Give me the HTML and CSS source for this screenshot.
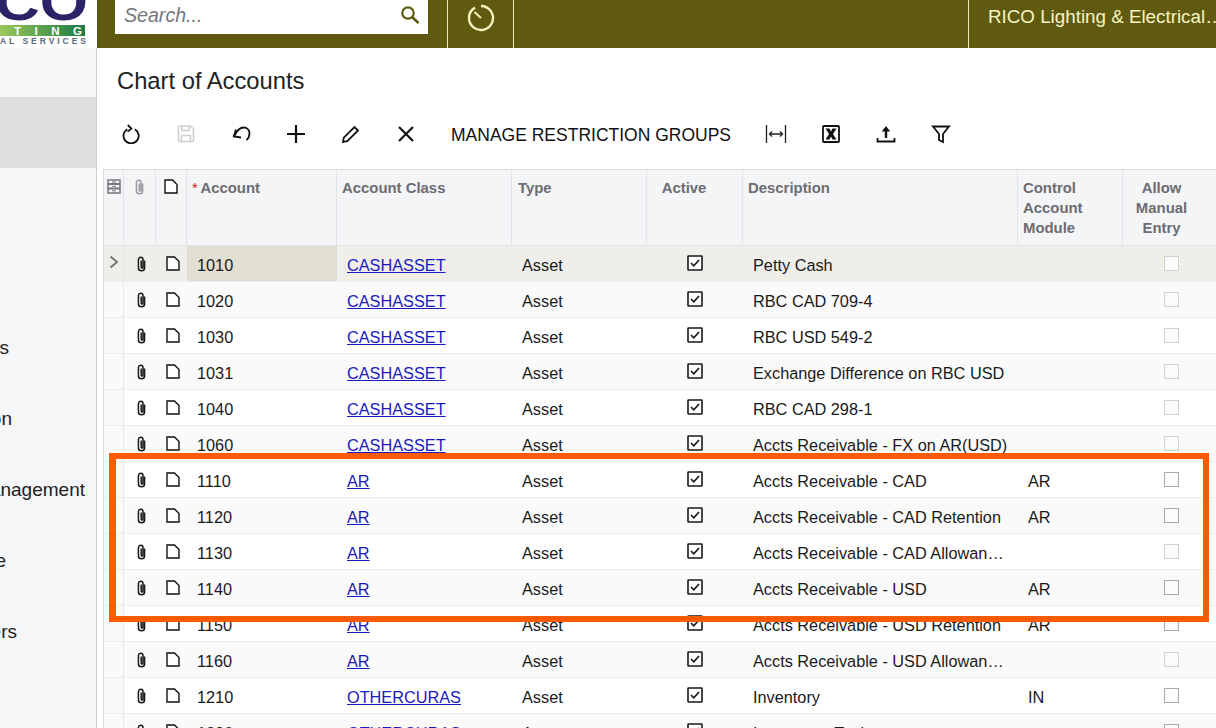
FILE: index.html
```html
<!DOCTYPE html>
<html lang="en">
<head>
<meta charset="utf-8">
<title>Chart of Accounts</title>
<link rel="stylesheet" href="styles.css">
</head>
<body>
<svg class="defs" aria-hidden="true">
  <symbol id="clip" viewBox="0 0 11 16"><path d="M8.6 4.5v7.2a3.1 3.1 0 0 1-6.2 0V3.6a2.3 2.3 0 0 1 4.6 0v7.6a.9.9 0 0 1-1.8 0V4.5" fill="none" stroke="currentColor" stroke-width="1.5"/></symbol>
  <symbol id="doc" viewBox="0 0 14 15"><path d="M1 1h7.5L13 5.5V14H1z" fill="#fff" stroke="currentColor" stroke-width="1.4"/></symbol>
  <symbol id="chk" viewBox="0 0 16 16"><rect x="1" y="1" width="14" height="14" rx=".5" fill="#fff" stroke="#1a1a1a" stroke-width="1.6"/><path d="M4 8l2.8 2.8L12 5" fill="none" stroke="#1a1a1a" stroke-width="1.7"/></symbol>
</svg>

<header class="topbar">
  <div class="logo">
    <svg width="97" height="48" viewBox="0 0 97 48">
      <defs><linearGradient id="band"><stop offset="0" stop-color="#9cc75a"/><stop offset="1" stop-color="#1c7a44"/></linearGradient></defs>
      <text class="logo-big" x="-5" y="20" textLength="93" lengthAdjust="spacingAndGlyphs">CO</text>
      <rect y="25" width="85" height="11" fill="url(#band)"/>
      <text class="logo-band" x="14" y="35" textLength="68">T I N G</text>
      <text class="logo-sub" x="0" y="44" textLength="86">AL SERVICES</text>
    </svg>
  </div>
  <div class="search">
    <span class="search-text">Search...</span>
    <svg class="search-icon" width="20" height="20" viewBox="0 0 20 20"><circle cx="8" cy="8" r="5.7" fill="none" stroke="currentColor" stroke-width="2.2"/><path d="M12.3 12.3L18.5 18" stroke="currentColor" stroke-width="2.6" fill="none"/></svg>
  </div>
  <div class="timer">
    <svg width="30" height="30" viewBox="0 0 30 30"><path d="M9 4.6A12 12 0 1 0 15 3" fill="none" stroke="currentColor" stroke-width="2.400"/><path d="M8.500 9L15 15" stroke="currentColor" stroke-width="2" fill="none"/></svg>
  </div>
  <div class="spacer"></div>
  <div class="tenant">RICO Lighting &amp; Electrical Services Ltd</div>
</header>

<div class="body-wrap">
  <nav class="sidebar">
    <div class="side-item"></div>
    <div class="side-item side-active"></div>
    <div class="side-item"></div>
    <div class="side-item"></div>
    <div class="side-item end-s">Payables</div>
    <div class="side-item end-on">Organization</div>
    <div class="side-item end-nag">Management</div>
    <div class="side-item end-e">Finance</div>
    <div class="side-item end-rs">Customers</div>
  </nav>

  <main class="content">
    <h1 class="title">Chart of Accounts</h1>
    <div class="toolbar">
      <span class="tool"><svg width="20" height="20" viewBox="0 0 20 20"><path d="M6.3 5.2a7.6 7.6 0 1 0 7.6 0" class="st"/><path d="M6.8 1l3.6 3.6-3.8 3" class="st"/></svg></span>
      <span class="tool"><svg width="20" height="20" viewBox="0 0 20 20"><path d="M2.500 3.500a1.500 1.500 0 0 1 1.500-1.500h10.500l3 3v11a1.500 1.500 0 0 1-1.500 1.500H4a1.500 1.500 0 0 1-1.500-1.500z" class="st1"/><path d="M6 2v4.500h7V2M5.500 18v-6.500h9V18" class="st1"/></svg></span>
      <span class="tool"><svg width="20" height="20" viewBox="0 0 20 20"><path d="M5 5.500L2.800 12.500L10 13.500" class="st"/><path d="M3.200 12C6 6.500 9 3.500 12.500 3.500C16 3.500 18.500 6 18.500 9.300C18.500 12 17.300 14.500 15.500 16" class="st"/></svg></span>
      <span class="tool"><svg width="20" height="20" viewBox="0 0 20 20"><path d="M10 1v18M1 10h18" class="st2"/></svg></span>
      <span class="tool"><svg width="20" height="20" viewBox="0 0 20 20"><path d="M2 18l.8-4.300L13.500 3 17 6.500 6.300 17.200z" class="st"/></svg></span>
      <span class="tool"><svg width="20" height="20" viewBox="0 0 20 20"><path d="M3 3l14 14M17 3L3 17" class="st2"/></svg></span>
      <span class="tool-text">MANAGE RESTRICTION GROUPS</span>
      <span class="tool"><svg width="22" height="20" viewBox="0 0 22 20"><path d="M1.500 1v18M20.500 1v18M4.500 10h13M7 7.500L4.500 10 7 12.500M15 7.500l2.500 2.500-2.500 2.500" class="st3"/></svg></span>
      <span class="tool"><svg width="20" height="20" viewBox="0 0 20 20"><rect x="2" y="2" width="16" height="16" rx="1" fill="none" stroke="#111" stroke-width="1.800"/><path d="M4.500 4.500h4L10 7.500l1.500-3h4l-3.500 5.500 3.500 5.500h-4L10 12.500l-1.500 3h-4L8 10z" fill="#111"/></svg></span>
      <span class="tool"><svg width="20" height="20" viewBox="0 0 20 20"><path d="M1.500 14v3.500h17V14" class="st"/><path d="M10 14V4" stroke="#111" stroke-width="2.400" fill="none"/><path d="M5.800 7.500L10 2l4.200 5.500z" fill="#111"/></svg></span>
      <span class="tool"><svg width="20" height="20" viewBox="0 0 20 20"><path d="M2 2.500h16l-6 7.500v8l-4-2v-6z" class="st"/></svg></span>
    </div>

    <table class="grid">
      <colgroup>
        <col class="c-sel"><col class="c-clip"><col class="c-doc"><col class="c-acc"><col class="c-class"><col class="c-type"><col class="c-act"><col class="c-desc"><col class="c-ctl"><col class="c-man">
      </colgroup>
      <thead>
        <tr>
          <th class="ico"><svg class="hd-files" width="14" height="15" viewBox="0 0 14 15"><path d="M1 1h12v13H1z" fill="none" stroke="currentColor" stroke-width="1.500"/><path d="M1 5h12M1 9.500h12" stroke="currentColor" stroke-width="2"/><path d="M5 3h4M5 7.300h4M5 11.800h4" stroke="currentColor" stroke-width="1"/></svg></th>
          <th class="ico"><svg class="hd-clip"><use href="#clip"/></svg></th>
          <th class="ico"><svg class="hd-doc"><use href="#doc"/></svg></th>
          <th class="acc-h"><span class="req">*</span> Account</th>
          <th>Account Class</th>
          <th class="type-h">Type</th>
          <th class="ctr">Active</th>
          <th>Description</th>
          <th>Control<br>Account<br>Module</th>
          <th class="ctr">Allow<br>Manual<br>Entry</th>
        </tr>
      </thead>
      <tbody>
        <tr class="sel"><td class="sel-cell"><svg class="chev" width="12" height="14" viewBox="0 0 12 14"><path d="M2.500 1.500L9 7l-6.500 5.500" fill="none" stroke="currentColor" stroke-width="2"/></svg></td><td class="ico"><svg class="clip"><use href="#clip"/></svg></td><td class="ico"><svg class="doc"><use href="#doc"/></svg></td><td class="acc-on">1010</td><td><a href="#">CASHASSET</a></td><td>Asset</td><td class="ctr"><svg class="chk"><use href="#chk"/></svg></td><td>Petty Cash</td><td></td><td class="ctr"><span class="box lt"></span></td></tr>
        <tr><td></td><td class="ico"><svg class="clip"><use href="#clip"/></svg></td><td class="ico"><svg class="doc"><use href="#doc"/></svg></td><td>1020</td><td><a href="#">CASHASSET</a></td><td>Asset</td><td class="ctr"><svg class="chk"><use href="#chk"/></svg></td><td>RBC CAD 709-4</td><td></td><td class="ctr"><span class="box lt"></span></td></tr>
        <tr><td></td><td class="ico"><svg class="clip"><use href="#clip"/></svg></td><td class="ico"><svg class="doc"><use href="#doc"/></svg></td><td>1030</td><td><a href="#">CASHASSET</a></td><td>Asset</td><td class="ctr"><svg class="chk"><use href="#chk"/></svg></td><td>RBC USD 549-2</td><td></td><td class="ctr"><span class="box lt"></span></td></tr>
        <tr><td></td><td class="ico"><svg class="clip"><use href="#clip"/></svg></td><td class="ico"><svg class="doc"><use href="#doc"/></svg></td><td>1031</td><td><a href="#">CASHASSET</a></td><td>Asset</td><td class="ctr"><svg class="chk"><use href="#chk"/></svg></td><td>Exchange Difference on RBC USD</td><td></td><td class="ctr"><span class="box lt"></span></td></tr>
        <tr><td></td><td class="ico"><svg class="clip"><use href="#clip"/></svg></td><td class="ico"><svg class="doc"><use href="#doc"/></svg></td><td>1040</td><td><a href="#">CASHASSET</a></td><td>Asset</td><td class="ctr"><svg class="chk"><use href="#chk"/></svg></td><td>RBC CAD 298-1</td><td></td><td class="ctr"><span class="box lt"></span></td></tr>
        <tr><td></td><td class="ico"><svg class="clip"><use href="#clip"/></svg></td><td class="ico"><svg class="doc"><use href="#doc"/></svg></td><td>1060</td><td><a href="#">CASHASSET</a></td><td>Asset</td><td class="ctr"><svg class="chk"><use href="#chk"/></svg></td><td>Accts Receivable - FX on AR(USD)</td><td></td><td class="ctr"><span class="box lt"></span></td></tr>
        <tr><td></td><td class="ico"><svg class="clip"><use href="#clip"/></svg></td><td class="ico"><svg class="doc"><use href="#doc"/></svg></td><td>1110</td><td><a href="#">AR</a></td><td>Asset</td><td class="ctr"><svg class="chk"><use href="#chk"/></svg></td><td>Accts Receivable - CAD</td><td>AR</td><td class="ctr"><span class="box"></span></td></tr>
        <tr><td></td><td class="ico"><svg class="clip"><use href="#clip"/></svg></td><td class="ico"><svg class="doc"><use href="#doc"/></svg></td><td>1120</td><td><a href="#">AR</a></td><td>Asset</td><td class="ctr"><svg class="chk"><use href="#chk"/></svg></td><td>Accts Receivable - CAD Retention</td><td>AR</td><td class="ctr"><span class="box"></span></td></tr>
        <tr><td></td><td class="ico"><svg class="clip"><use href="#clip"/></svg></td><td class="ico"><svg class="doc"><use href="#doc"/></svg></td><td>1130</td><td><a href="#">AR</a></td><td>Asset</td><td class="ctr"><svg class="chk"><use href="#chk"/></svg></td><td>Accts Receivable - CAD Allowance for Doubtful Accounts</td><td></td><td class="ctr"><span class="box lt"></span></td></tr>
        <tr><td></td><td class="ico"><svg class="clip"><use href="#clip"/></svg></td><td class="ico"><svg class="doc"><use href="#doc"/></svg></td><td>1140</td><td><a href="#">AR</a></td><td>Asset</td><td class="ctr"><svg class="chk"><use href="#chk"/></svg></td><td>Accts Receivable - USD</td><td>AR</td><td class="ctr"><span class="box"></span></td></tr>
        <tr><td></td><td class="ico"><svg class="clip"><use href="#clip"/></svg></td><td class="ico"><svg class="doc"><use href="#doc"/></svg></td><td>1150</td><td><a href="#">AR</a></td><td>Asset</td><td class="ctr"><svg class="chk"><use href="#chk"/></svg></td><td>Accts Receivable - USD Retention</td><td>AR</td><td class="ctr"><span class="box"></span></td></tr>
        <tr><td></td><td class="ico"><svg class="clip"><use href="#clip"/></svg></td><td class="ico"><svg class="doc"><use href="#doc"/></svg></td><td>1160</td><td><a href="#">AR</a></td><td>Asset</td><td class="ctr"><svg class="chk"><use href="#chk"/></svg></td><td>Accts Receivable - USD Allowance for Doubtful Accounts</td><td></td><td class="ctr"><span class="box lt"></span></td></tr>
        <tr><td></td><td class="ico"><svg class="clip"><use href="#clip"/></svg></td><td class="ico"><svg class="doc"><use href="#doc"/></svg></td><td>1210</td><td><a href="#">OTHERCURAS</a></td><td>Asset</td><td class="ctr"><svg class="chk"><use href="#chk"/></svg></td><td>Inventory</td><td>IN</td><td class="ctr"><span class="box"></span></td></tr>
        <tr><td></td><td class="ico"><svg class="clip"><use href="#clip"/></svg></td><td class="ico"><svg class="doc"><use href="#doc"/></svg></td><td>1220</td><td><a href="#">OTHERCURAS</a></td><td>Asset</td><td class="ctr"><svg class="chk"><use href="#chk"/></svg></td><td>Inventory - Tools</td><td></td><td class="ctr"><span class="box"></span></td></tr>
      </tbody>
    </table>
  </main>
</div>

<div class="callout"></div>
</body>
</html>
```

FILE: styles.css
```css
* { box-sizing: border-box; }
html, body { margin: 0; height: 728px; overflow: hidden; background: #fff; }
body { font-family: "Liberation Sans", Arial, sans-serif; color: #1a1a1a; position: relative; }
.defs { position: absolute; width: 0; height: 0; }

/* top bar */
.topbar { display: flex; height: 48px; background: #5f5a10; color: #f6f3c2; }
.logo { width: 97px; flex: none; background: #f5f6f8; overflow: hidden; }
.logo svg { display: block; background: #fff; }
.logo-big { font: bold 52px "Liberation Sans", sans-serif; fill: #2a2366; }
.logo-band { font: bold 11.5px "Liberation Sans", sans-serif; fill: #fff; }
.logo-sub { font: bold 8.5px "Liberation Sans", sans-serif; fill: #5a6a7a; }
.search { width: 313px; height: 34px; margin-left: 18px; background: #fff; display: flex; align-items: center; justify-content: space-between; padding: 0 8px 4px 9px; flex: none; }
.search-text { font: italic 19.6px "Liberation Sans", sans-serif; color: #77777c; }
.search-icon { color: #5f5a10; }
.timer { width: 67px; flex: none; margin-left: 19px; border-left: 1px solid #ece8b8; border-right: 1px solid #ece8b8; display: flex; justify-content: center; align-items: flex-start; padding-top: 3px; }
.timer svg { display: block; }
.spacer { width: 454px; flex: none; }
.tenant { width: 260px; flex: none; border-left: 1px solid #ece8b8; padding: 6px 0 0 19px; font-size: 18.8px; line-height: 22px; white-space: nowrap; overflow: hidden; text-overflow: ellipsis; }

/* layout */
.body-wrap { display: flex; height: 680px; }
.sidebar { width: 97px; flex: none; background: #f5f6f8; border-right: 1px solid #cfcfcf; overflow: hidden; }
.side-item { height: 71px; display: flex; align-items: center; justify-content: flex-end; padding-top: 4px; font-size: 19px; color: #222; white-space: nowrap; }
.side-item:first-child { height: 49px; }
.side-active { background: #dedede; }
.end-s { width: 9px; }
.end-on { width: 12px; }
.end-nag { width: 85px; }
.end-e { width: 6px; }
.end-rs { width: 17px; }

.content { flex: 1; min-width: 0; padding-left: 6px; overflow: hidden; }
.title { margin: 0 0 0 14px; height: 66px; display: flex; align-items: center; font-size: 23.75px; font-weight: 400; color: #222; }
.toolbar { display: flex; align-items: center; height: 40px; }
.tool { width: 55px; flex: none; display: flex; align-items: center; justify-content: center; color: #111; }
.tool svg { display: block; }
.tool-text { padding: 2px 17px 0 18px; font-size: 17.5px; color: #111; white-space: nowrap; }
.st { fill: none; stroke: #111; stroke-width: 1.8; }
.st1 { fill: none; stroke: #cfcfcf; stroke-width: 1.6; }
.st2 { fill: none; stroke: #111; stroke-width: 2.2; }
.st3 { fill: none; stroke: #222; stroke-width: 1.3; }

/* grid */
.grid { margin-top: 15px; width: 1117px; table-layout: fixed; border-collapse: separate; border-spacing: 0; border-left: 1px solid #dcdde0; border-top: 1px solid #dcdde0; }
.c-sel { width: 20px; } .c-clip { width: 32px; } .c-doc { width: 31px; } .c-acc { width: 150px; } .c-class { width: 175px; }
.c-type { width: 135px; } .c-act { width: 96px; } .c-desc { width: 275px; } .c-ctl { width: 105px; } .c-man { width: 98px; }
.grid th { height: 76px; background: #f4f5f7; color: #6c6c72; font-size: 14.9px; line-height: 20px; font-weight: 700; text-align: left; vertical-align: top; padding: 8px 5px 0; border-right: 1px solid #e2e4e9; border-bottom: 1px solid #e2e4e9; }
.grid th:last-child { border-right: 0; }
.grid th.ctr { text-align: center; padding-right: 26px; }
.grid th.ico { padding: 8px 0 0; text-align: center; }
.grid th.acc-h { word-spacing: -1px; }
.grid th.type-h { padding-left: 6px; }
.req { color: #d91c1c; font-weight: 400; }
.hd-files { color: #77777c; display: block; margin: 1px 0 0 3px; }
.hd-clip { width: 11px; height: 16px; color: #9a9a9f; display: block; margin: 1px 0 0 10px; }
.hd-doc { width: 14px; height: 15px; color: #111; display: block; margin: 1px 0 0 8px; }
.grid td { height: 36px; padding: 3px 10px 0; font-size: 16.3px; color: #1a1a1a; background: #fff; border-bottom: 1px solid #eeeeee; white-space: nowrap; overflow: hidden; text-overflow: ellipsis; }
.grid tbody tr:nth-child(even) td { background: #fafafa; }
.grid td:first-child { padding: 0; background: #f8f8f9; border-right: 1px solid #e8e9ec; }
.grid td.ico { padding: 0; text-align: center; }
.grid td.ctr { padding: 0; text-align: center; }
.grid tbody tr.sel td { background: #efeee9; }
.grid tbody tr.sel td.acc-on { background: #e0dfd2; }
.grid a { color: #1a1ac0; text-decoration: underline; }
.clip { width: 11px; height: 16px; color: #1a1a1a; display: block; margin: 0 0 0 12px; }
.doc { width: 14px; height: 15px; color: #111; display: block; margin: 0 0 0 10px; }
.chev { color: #77777c; display: block; margin: 0 0 4px 4px; }
.chk { width: 16px; height: 16px; display: block; margin: 0 auto 1px; }
.box { display: block; width: 15px; height: 15px; margin: 0 auto 1px; position: relative; left: -1px; background: #fbfbfb; border: 1.5px solid #a9a9a9; }
.box.lt { border-color: #d2d2d2; }

/* annotation drawn over the screenshot */
.callout { position: absolute; left: 109px; top: 453px; width: 1100px; height: 169px; border: 6px solid #fd5b03; border-left-width: 7px; }
```
